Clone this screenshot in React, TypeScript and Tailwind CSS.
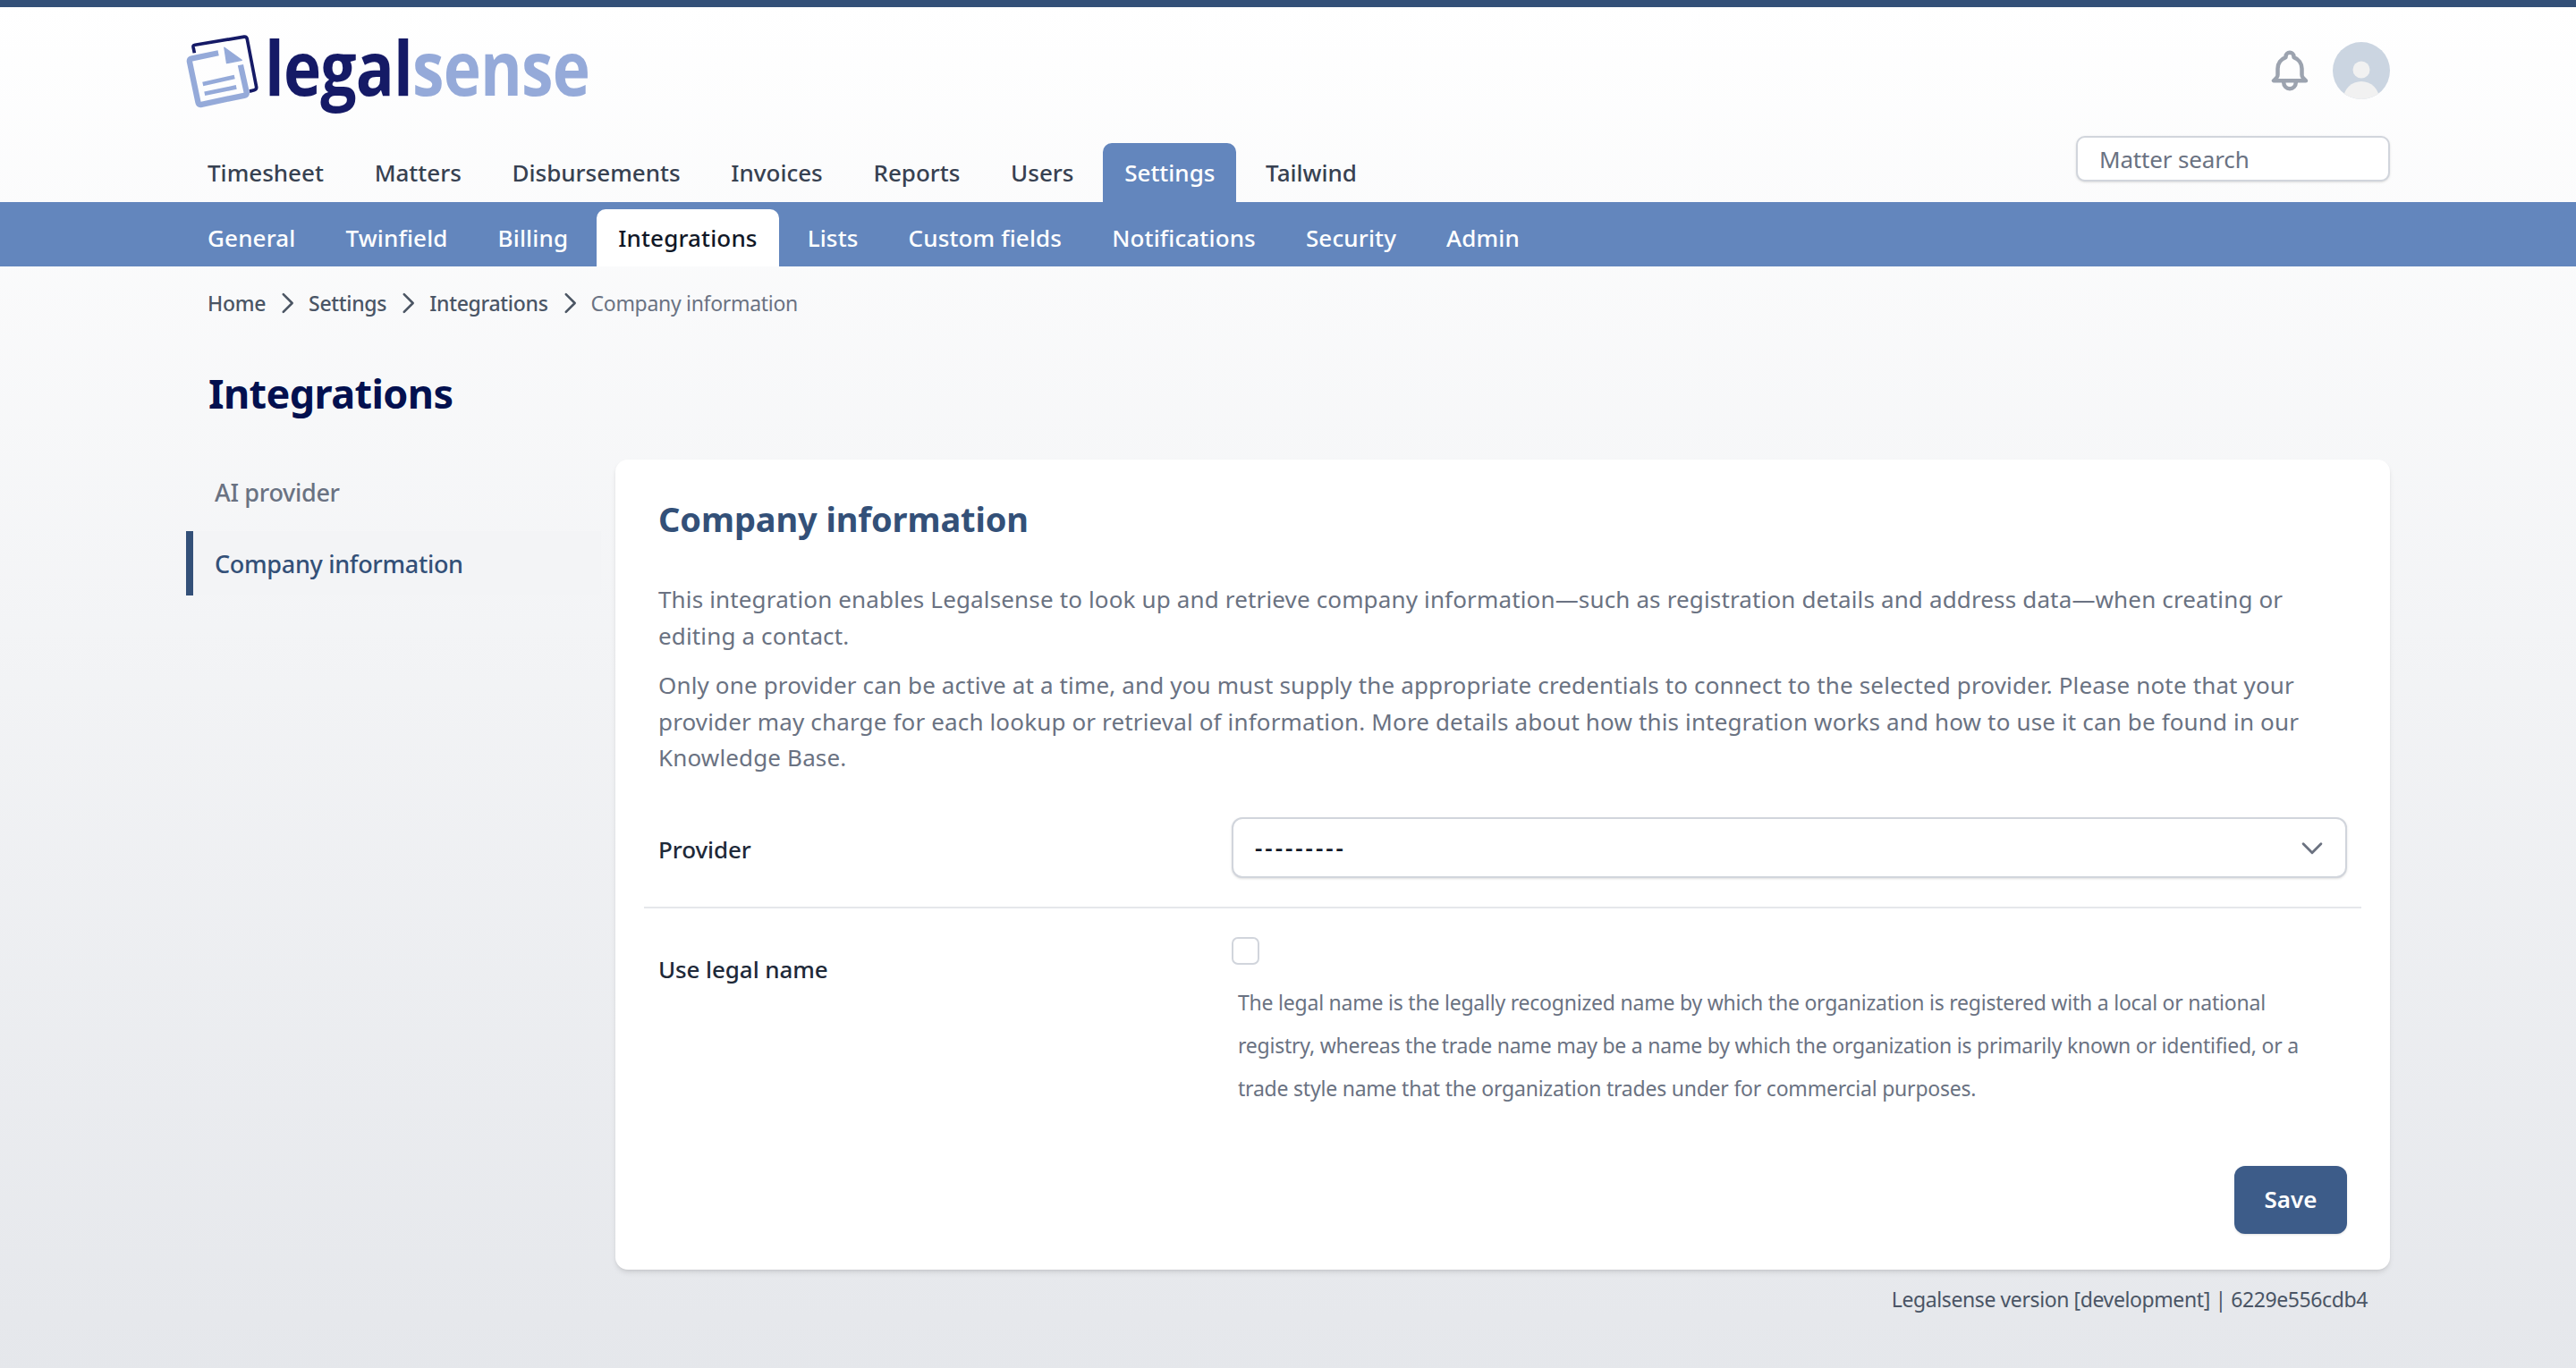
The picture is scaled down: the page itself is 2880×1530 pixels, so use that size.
import React from 'react'

const mainNav = ['Timesheet', 'Matters', 'Disbursements', 'Invoices', 'Reports', 'Users', 'Settings', 'Tailwind']
const subNav = ['General', 'Twinfield', 'Billing', 'Integrations', 'Lists', 'Custom fields', 'Notifications', 'Security', 'Admin']

function Logo() {
  return (
    <div className="flex items-start h-[84px]">
      <svg width="82" height="84" viewBox="50 55 245 250" fill="none" className="shrink-0">
        <path d="M78 118 L74 98 Q73 92 80 91 L244 64 Q252 63 254 71 L285 232 Q286 240 278 242 L262 246" stroke="#151a66" strokeWidth="11" strokeLinejoin="round" />
        <path d="M158 118 L70 136 Q60 138 62 148 L90 282 Q92 292 102 290 L244 260 Q254 258 252 248 L232 158" stroke="#95aad9" strokeWidth="19" strokeLinejoin="round" />
        <path d="M178 100 L236 142 L186 152 Z" fill="#95aad9" stroke="#95aad9" strokeWidth="4" strokeLinejoin="round" />
        <path d="M106 222 L212 198 M112 254 L218 232" stroke="#95aad9" strokeWidth="14" />
      </svg>
      <div className="w-[361px] ml-[6px] -mt-[6px] h-[84px] font-['Open_Sans',sans-serif] font-bold text-[85px] leading-[84px] whitespace-nowrap origin-left scale-x-[0.84] tracking-[-1px]">
        <span className="text-[#151a66]">legal</span>
        <span className="text-[#95aad9]">sense</span>
      </div>
    </div>
  )
}

function Bell() {
  return (
    <svg width="54" height="54" viewBox="0 0 24 24" fill="none" stroke="#9ca3af" strokeWidth="2" strokeLinecap="round" strokeLinejoin="round">
      <path d="M15 17h5l-1.405-1.405A2.032 2.032 0 0118 14.158V11a6.002 6.002 0 00-4-5.659V5a2 2 0 10-4 0v.341C7.67 6.165 6 8.388 6 11v3.159c0 .538-.214 1.055-.595 1.436L4 17h5m6 0v1a3 3 0 11-6 0v-1m6 0H9" />
    </svg>
  )
}

function Avatar() {
  return (
    <svg width="64" height="64" viewBox="0 0 64 64" className="shrink-0">
      <defs>
        <clipPath id="avatarClip">
          <circle cx="32" cy="32" r="32" />
        </clipPath>
      </defs>
      <g clipPath="url(#avatarClip)">
        <rect width="64" height="64" fill="#cbd5e1" />
        <circle cx="32" cy="31" r="9.5" fill="#f1f1f1" />
        <ellipse cx="32" cy="64" rx="20" ry="20" fill="#f1f1f1" />
      </g>
    </svg>
  )
}

function Chevron() {
  return (
    <svg width="34" height="34" viewBox="0 0 24 24" fill="none" stroke="#4b5563" strokeWidth="1.8" strokeLinecap="round" strokeLinejoin="round" className="shrink-0">
      <path d="M9 5l7 7-7 7" />
    </svg>
  )
}

export default function App() {
  return (
    <div className="min-h-screen bg-gradient-to-b from-white to-gray-200 font-['Noto_Sans',sans-serif] text-gray-500">
      <div className="h-2 bg-[#335078]" />

      <header>
        <div className="w-[2464px] mx-auto">
          <div className="h-[144px] flex justify-between items-start">
            <div className="pt-[30px]">
              <Logo />
            </div>
            <div className="flex items-center gap-[21px] pt-[39px]">
              <Bell />
              <Avatar />
            </div>
          </div>
          <div className="h-[74px] flex justify-between">
            <nav className="flex items-end gap-[8.7px]">
              {mainNav.map((item) => (
                <a
                  key={item}
                  className={
                    item === 'Settings'
                      ? 'h-[66px] px-6 flex items-center rounded-t-[10px] bg-[#6386bd] text-white text-[26px] font-medium'
                      : 'h-[66px] px-6 flex items-center text-[#374151] text-[26px] font-medium'
                  }
                >
                  {item}
                </a>
              ))}
            </nav>
            <input
              placeholder="Matter search"
              className="w-[351px] h-[51px] rounded-[10px] border-2 border-gray-300 bg-white px-6 text-[26px] tracking-[-0.15px] shadow-sm outline-none placeholder:text-gray-500"
            />
          </div>
        </div>
      </header>

      <div className="bg-[#6386bd]">
        <nav className="w-[2464px] mx-auto h-[72px] flex items-end gap-[8px]">
          {subNav.map((item) => (
            <a
              key={item}
              className={
                item === 'Integrations'
                  ? 'h-[64px] px-6 flex items-center rounded-t-[10px] bg-white text-[#111827] text-[26px] font-medium tracking-[0.15px]'
                  : 'h-[64px] px-6 flex items-center text-white text-[26px] font-medium tracking-[0.15px]'
              }
            >
              {item}
            </a>
          ))}
        </nav>
      </div>

      <main className="w-[2464px] mx-auto">
        <div className="pb-[2px] pl-6 h-[84px] flex items-center text-[23px] tracking-[-0.3px]">
          <a className="font-medium text-gray-600">Home</a>
          <span className="mx-[7px]"><Chevron /></span>
          <a className="font-medium text-gray-600">Settings</a>
          <span className="mx-[7px]"><Chevron /></span>
          <a className="font-medium text-gray-600">Integrations</a>
          <span className="mx-[7px]"><Chevron /></span>
          <span className="text-gray-500">Company information</span>
        </div>

        <h1 className="pl-[25px] mt-[28px] h-[60px] flex items-center text-[45px] font-bold text-[#03104f] tracking-[-0.6px]">Integrations</h1>

        <div className="flex mt-[44px]">
          <aside className="w-[480px] shrink-0 pr-4 flex flex-col gap-[8px]">
            <a className="h-[72px] pl-8 pt-[2px] flex items-center text-[27px] font-medium text-gray-500 tracking-[-0.3px]">AI provider</a>
            <a className="h-[72px] pl-6 pt-[2px] flex items-center border-l-8 border-[#335078] bg-gray-100 text-[27px] font-medium text-[#335078] tracking-[-0.3px]">Company information</a>
          </aside>

          <section className="flex-1 h-[906px] rounded-[14px] bg-white shadow-md px-12 pt-[40px]">
            <h2 className="h-[52px] flex items-center text-[38px] font-bold text-[#335078] tracking-[-0.1px]">Company information</h2>

            <div className="mt-[44px] text-[26px] leading-[40.5px] tracking-[0.15px] flex flex-col gap-[15px]">
              <p>
                This integration enables Legalsense to look up and retrieve company information—such as registration details and address data—when creating or
                <br />
                editing a contact.
              </p>
              <p>
                Only one provider can be active at a time, and you must supply the appropriate credentials to connect to the selected provider. Please note that your
                <br />
                provider may charge for each lookup or retrieval of information. More details about how this integration works and how to use it can be found in our
                <br />
                Knowledge Base.
              </p>
            </div>

            <div className="mt-[46px] flex items-center h-[68px]">
              <label className="w-[641px] shrink-0 pt-[6px] text-[26px] font-medium text-gray-800 tracking-[-0.1px]">Provider</label>
              <div className="relative flex-1">
                <select className="w-full h-[68px] appearance-none rounded-[12px] border-2 border-gray-300 bg-white pl-6 text-[26px] font-semibold text-gray-900 shadow-sm outline-none tracking-[3px]">
                  <option>---------</option>
                </select>
                <svg width="34" height="34" viewBox="0 0 24 24" fill="none" stroke="#6b7280" strokeWidth="2" strokeLinecap="round" strokeLinejoin="round" className="absolute right-[22px] top-[17px]">
                  <path d="M19 9l-7 7-7-7" />
                </svg>
              </div>
            </div>

            <div className="-mx-4 mt-[32px] h-[2px] bg-gray-200" />

            <div className="mt-[32px] flex">
              <label className="w-[641px] shrink-0 pt-[17px] text-[26px] font-medium text-gray-800 tracking-[-0.1px]">Use legal name</label>
              <div className="flex-1">
                <input type="checkbox" className="block w-[31px] h-[31px] appearance-none rounded-[7px] border-2 border-gray-300 bg-white" />
                <p className="mt-[18px] pl-[7px] text-[23px] leading-[48px] tracking-[-0.22px]">
                  The legal name is the legally recognized name by which the organization is registered with a local or national
                  <br />
                  registry, whereas the trade name may be a name by which the organization is primarily known or identified, or a
                  <br />
                  trade style name that the organization trades under for commercial purposes.
                </p>
              </div>
            </div>

            <div className="mt-[63px] flex justify-end">
              <button className="w-[126px] h-[76px] rounded-[12px] bg-[#3d5c89] text-white text-[26px] font-semibold shadow-sm">Save</button>
            </div>
          </section>
        </div>

        <div className="mt-[16px] pr-[25px] h-[34px] flex items-center justify-end text-[23px] text-gray-600 tracking-[-0.4px]">
          Legalsense version [development] | 6229e556cdb4
        </div>
      </main>
    </div>
  )
}
